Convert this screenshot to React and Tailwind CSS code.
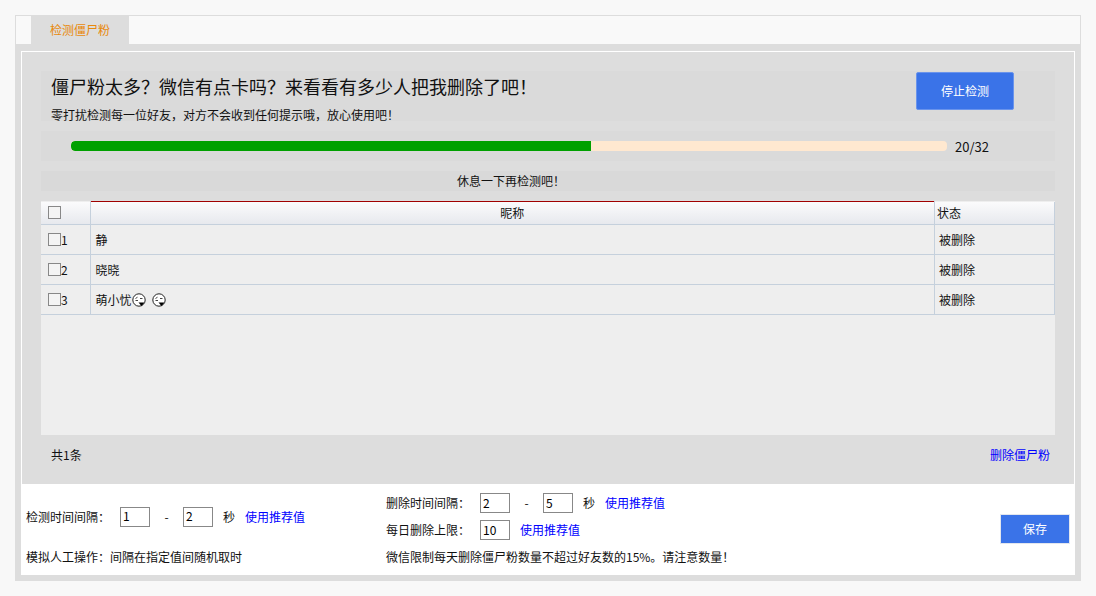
const rows = [
  { id: 1, name: "静" },
  { id: 2, name: "晓晓" },
  { id: 3, name: "萌小忧", emoji: true },
];

function Face({ className }) {
  return (
    <svg className={className} width="14" height="14" viewBox="0 0 14 14" fill="none">
      <circle cx="7" cy="7" r="6.2" fill="#fff" stroke="#222" strokeWidth="1" />
      <path d="M3.5 5.5 5.5 4.2M8 5.5h2.5M3.5 7.5h2.5" stroke="#444" strokeWidth="1" />
      <path d="M6.5 9.5h6L9.5 13z" fill="#000" />
    </svg>
  );
}

function Check() {
  return <input type="checkbox" className="appearance-none w-[13px] h-[13px] border border-[#888] bg-[#f4f4f4] block shrink-0" />;
}

function NumInput({ value }) {
  return (
    <input
      defaultValue={value}
      className="w-[30px] h-[20px] border border-[#888] bg-white px-[2px] pb-[2px] text-[12px] text-black outline-none"
    />
  );
}

function Recommend({ className }) {
  return <a className={"text-[#0000ff] " + (className || "")}>使用推荐值</a>;
}

export default function App() {
  return (
    <div className="h-[596px] w-[1096px] bg-[#f8f8f8] p-[15px] text-[12px] leading-none text-[#111] font-['Noto_Sans_CJK_SC','Noto_Sans',sans-serif]">
      <div className="h-[566px] border-t border-l border-[#ddd] flex flex-col">
        <div className="h-[28px] flex pl-[15px] bg-[#f9f9f9] border-r border-[#ddd]">
          <div className="w-[98px] bg-[#ddd] text-[#e8890c] flex items-center justify-center">检测僵尸粉</div>
        </div>
        <div className="flex-1 bg-[#ddd] pt-[7px] pl-[5px] pr-[6px] pb-[6px] flex">
          <div className="flex-1 border border-white bg-white flex flex-col">
            <div className="h-[432px] bg-[#ddd] px-[19px] pt-[19px] flex flex-col">
              <div className="h-[50px] bg-[#dadada] pl-[10px] flex justify-between">
                <div>
                  <div className="text-[18px] mt-[6px] h-[18px] leading-[18px]">僵尸粉太多？微信有点卡吗？来看看有多少人把我删除了吧！</div>
                  <div className="mt-[14px]">零打扰检测每一位好友，对方不会收到任何提示哦，放心使用吧！</div>
                </div>
                <button className="w-[98px] h-[38px] mt-[1px] mr-[41px] bg-[#3a73e8] text-white rounded-[2px] border border-[#6a94ec]">停止检测</button>
              </div>
              <div className="h-[30px] mt-[10px] bg-[#dadada] pl-[30px] flex items-center">
                <div className="w-[876px] h-[10px] rounded-[4px] bg-[#ffe8d0] overflow-hidden">
                  <div className="w-[520px] h-full bg-[#00a000] rounded-l-[4px]" />
                </div>
                <span className="ml-[8px] text-[13px]">20/32</span>
              </div>
              <div className="h-[20px] mt-[10px] bg-[#d9d9d9] flex items-center justify-center pr-[74px]">休息一下再检测吧！</div>
              <div className="h-[234px] mt-[10px] bg-[#eee]">
                <table className="w-full table-fixed border-collapse">
                  <colgroup>
                    <col className="w-[49px]" />
                    <col />
                    <col className="w-[120px]" />
                  </colgroup>
                  <thead>
                    <tr className="h-[23px] bg-gradient-to-b from-[#fbfbfc] to-[#e6e8ed]">
                      <th className="border-r border-b border-[#c5d0dc] font-normal pl-[7px]">
                        <Check />
                      </th>
                      <th className="border-r border-b border-[#c5d0dc] border-t border-t-[#a00000] font-normal">昵称</th>
                      <th className="border-r border-b border-[#c5d0dc] font-normal text-left pl-[2px]">状态</th>
                    </tr>
                  </thead>
                  <tbody>
                    {rows.map((r) => (
                      <tr key={r.id} className="h-[30px]">
                        <td className="border-r border-b border-[#c5d0dc] pl-[7px]">
                          <div className="flex items-center">
                            <Check />
                            {r.id}
                          </div>
                        </td>
                        <td className="border-r border-b border-[#c5d0dc] pl-[5px]">
                          <div className="flex items-center">
                            {r.name}
                            {r.emoji && <Face />}
                            {r.emoji && <Face className="ml-[6px]" />}
                          </div>
                        </td>
                        <td className="border-r border-b border-[#c5d0dc] pl-[4px]">被删除</td>
                      </tr>
                    ))}
                  </tbody>
                </table>
              </div>
              <div className="flex-1 flex items-center justify-between pl-[10px] pr-[5px] pb-[10px]">
                <span>共1条</span>
                <a className="text-[#0000ff]">删除僵尸粉</a>
              </div>
            </div>
            <div className="flex-1 flex items-center pl-[4px] pt-[2px]">
              <div className="w-[360px]">
                <div className="h-[54px] flex items-center">
                  <span className="w-[94px]">检测时间间隔：</span>
                  <NumInput value="1" />
                  <span className="w-[33px] text-center">-</span>
                  <NumInput value="2" />
                  <span className="ml-[10px]">秒</span>
                  <Recommend className="ml-[10px]" />
                </div>
                <div className="h-[27px] flex items-center">模拟人工操作：间隔在指定值间随机取时</div>
              </div>
              <div className="w-[614px]">
                <div className="h-[27px] flex items-center">
                  <span className="w-[94px]">删除时间间隔：</span>
                  <NumInput value="2" />
                  <span className="w-[33px] text-center">-</span>
                  <NumInput value="5" />
                  <span className="ml-[10px]">秒</span>
                  <Recommend className="ml-[10px]" />
                </div>
                <div className="h-[27px] flex items-center">
                  <span className="w-[94px]">每日删除上限：</span>
                  <NumInput value="10" />
                  <Recommend className="ml-[10px]" />
                </div>
                <div className="h-[27px] flex items-center">微信限制每天删除僵尸粉数量不超过好友数的15%。请注意数量！</div>
              </div>
              <button className="w-[70px] h-[30px] mb-[2px] bg-[#3a73e8] text-white border border-[#e2e6ee]">保存</button>
            </div>
          </div>
        </div>
      </div>
    </div>
  );
}
